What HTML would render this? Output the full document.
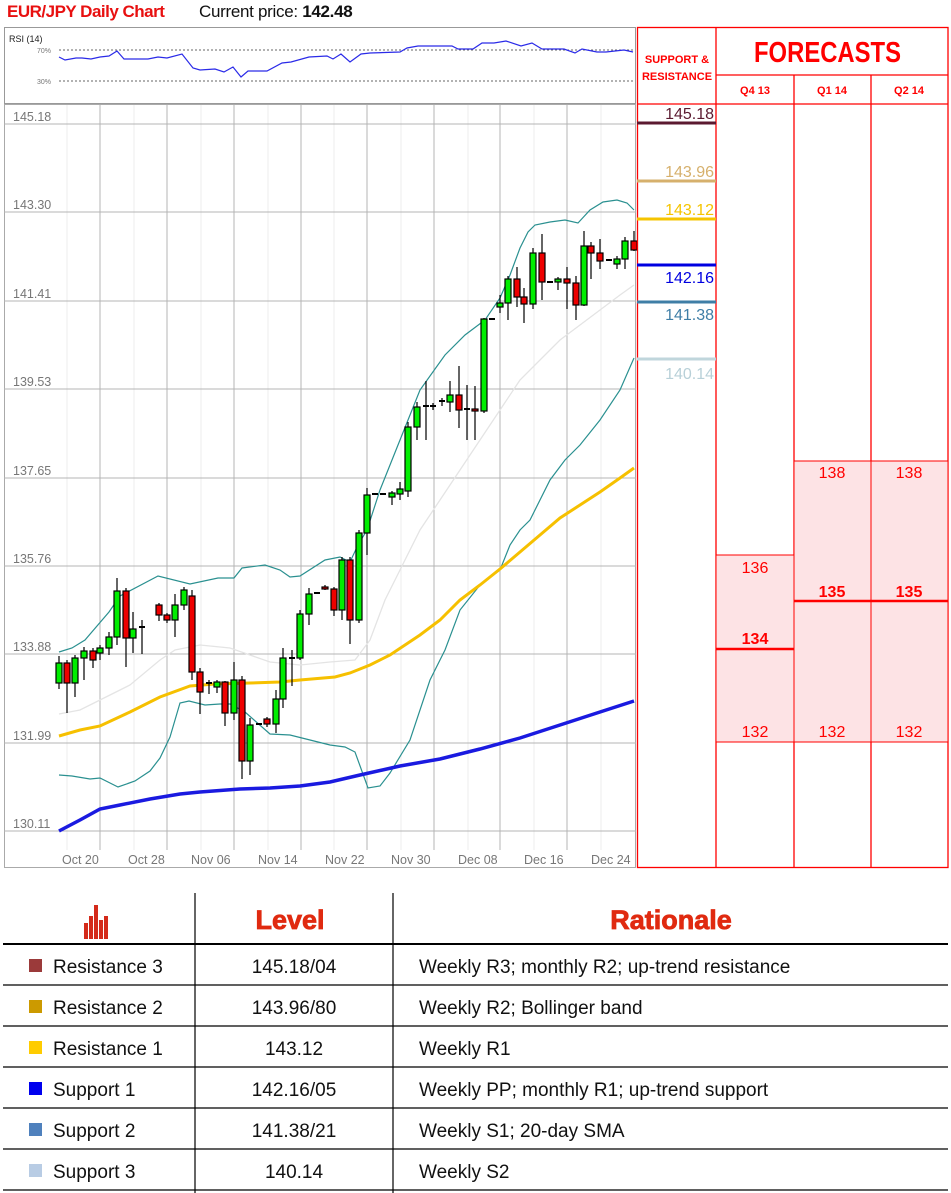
<!DOCTYPE html>
<html><head><meta charset="utf-8"><style>
body{margin:0;width:951px;height:1193px;background:#fff;position:relative;overflow:hidden;font-family:"Liberation Sans",sans-serif}
.t{position:absolute;white-space:nowrap}
</style></head><body>
<div class="t" style="left:7px;top:2px;font-size:17px;font-weight:bold;color:#e81010;letter-spacing:-0.5px">EUR/JPY Daily Chart</div>
<div class="t" style="left:199px;top:2px;font-size:17px;color:#111;letter-spacing:-0.3px">Current price: <b>142.48</b></div>

<svg width="951" height="870" style="position:absolute;left:0;top:0" font-family="Liberation Sans, sans-serif">
<rect x="4.5" y="27.5" width="631" height="76" fill="#fff" stroke="#999"/>
<text x="9" y="42" font-size="9" fill="#222">RSI (14)</text>
<text x="37" y="53" font-size="7" fill="#777">70%</text>
<text x="37" y="84" font-size="7" fill="#777">30%</text>
<line x1="59" y1="50" x2="634" y2="50" stroke="#666" stroke-dasharray="2,2"/>
<line x1="59" y1="81" x2="634" y2="81" stroke="#666" stroke-dasharray="2,2"/>
<polyline fill="none" stroke="#2a2ae8" stroke-width="1.2" points="59,57 65,60 76,58 82,58 91,59 100,57 109,56 117,51 124,59 148,59 158,57 167,58 182,54 193,68 200,70 215,69 224,72 233,67 241,77 248,71 267,71 282,63 291,62 309,57 327,56 333,59 341,54 350,62 361,54 370,53 400,52 407,48 418,46 452,46 458,49 473,49 482,43 494,43 506,41 521,46 532,43 542,49 564,49 575,53 582,49 597,52 606,52 624,50 633,52"/>
<rect x="4.5" y="104.5" width="631" height="763" fill="#fff" stroke="#aaa"/>
<g stroke="#ececec">
<line x1="67" y1="105" x2="67" y2="850"/><line x1="134" y1="105" x2="134" y2="850"/><line x1="201" y1="105" x2="201" y2="850"/><line x1="268" y1="105" x2="268" y2="850"/><line x1="334" y1="105" x2="334" y2="850"/><line x1="401" y1="105" x2="401" y2="850"/><line x1="468" y1="105" x2="468" y2="850"/><line x1="534" y1="105" x2="534" y2="850"/><line x1="601" y1="105" x2="601" y2="850"/>
</g>
<g stroke="#b4b4b4">
<line x1="100" y1="105" x2="100" y2="850"/><line x1="167" y1="105" x2="167" y2="850"/><line x1="234" y1="105" x2="234" y2="850"/><line x1="301" y1="105" x2="301" y2="850"/><line x1="367" y1="105" x2="367" y2="850"/><line x1="434" y1="105" x2="434" y2="850"/><line x1="500" y1="105" x2="500" y2="850"/><line x1="567" y1="105" x2="567" y2="850"/>
<line x1="4" y1="124" x2="636" y2="124"/><line x1="4" y1="212" x2="636" y2="212"/><line x1="4" y1="301" x2="636" y2="301"/><line x1="4" y1="389" x2="636" y2="389"/><line x1="4" y1="478" x2="636" y2="478"/><line x1="4" y1="566" x2="636" y2="566"/><line x1="4" y1="654" x2="636" y2="654"/><line x1="4" y1="743" x2="636" y2="743"/><line x1="4" y1="831" x2="636" y2="831"/>
</g>
<g font-size="12.5" fill="#777">
<text x="13" y="121">145.18</text><text x="13" y="209">143.30</text><text x="13" y="298">141.41</text><text x="13" y="386">139.53</text><text x="13" y="475">137.65</text><text x="13" y="563">135.76</text><text x="13" y="651">133.88</text><text x="13" y="740">131.99</text><text x="13" y="828">130.11</text>
<text x="62" y="864">Oct 20</text><text x="128" y="864">Oct 28</text><text x="191" y="864">Nov 06</text><text x="258" y="864">Nov 14</text><text x="325" y="864">Nov 22</text><text x="391" y="864">Nov 30</text><text x="458" y="864">Dec 08</text><text x="524" y="864">Dec 16</text><text x="591" y="864">Dec 24</text>
</g>
<polyline fill="none" stroke="#e4e4e4" stroke-width="1.3" points="59,714 80,710 100,700 130,685 160,660 175,650 200,645 230,648 250,655 270,662 300,665 330,662 355,660 370,640 385,600 400,570 420,530 440,500 460,470 480,440 500,410 520,380 540,360 560,340 580,325 600,310 620,295 634,285"/>
<polyline fill="none" stroke="#2a9090" stroke-width="1.2" points="59,652 72,648 85,640 109,612 120,596 158,576 190,584 218,578 234,578 242,568 265,565 280,570 290,577 300,576 325,560 340,557 350,562 358,545 367,530 380,490 400,440 420,390 445,355 465,335 485,320 500,298 510,275 520,248 528,232 535,225 550,222 565,220 578,223 590,210 603,202 617,200 627,203 634,210"/>
<polyline fill="none" stroke="#2a9090" stroke-width="1.2" points="59,775 72,776 90,779 100,778 118,787 135,781 150,771 160,758 170,737 180,703 189,701 205,705 220,704 230,704 245,712 270,734 290,735 310,740 330,745 345,747 355,752 368,788 380,786 390,773 410,740 430,680 445,650 460,610 480,585 500,570 510,545 520,530 530,520 550,480 565,460 580,445 600,420 620,390 634,358"/>
<polyline fill="none" stroke="#f6c000" stroke-width="3" points="59,736 80,730 100,726 130,712 160,697 190,686 215,684 250,683 280,682 300,680 335,677 350,673 370,665 390,655 420,635 440,620 460,600 480,585 500,569 520,552 540,535 560,518 580,505 600,492 620,478 634,468"/>
<polyline fill="none" stroke="#1a1ae0" stroke-width="3.5" points="59,831 80,820 100,809 120,805 150,799 180,794 200,792 240,789 270,788 300,786 330,782 360,775 400,766 440,759 480,749 520,738 560,725 600,712 634,701"/>
<g id="c" stroke="#000" stroke-width="1.2"></g>
<g stroke="#f00" stroke-width="1.3" fill="none">
<rect x="637.5" y="27.5" width="310.5" height="840"/>
<line x1="716" y1="27" x2="716" y2="868"/>
<line x1="794" y1="75" x2="794" y2="868"/>
<line x1="871" y1="75" x2="871" y2="868"/>
<line x1="716" y1="75" x2="948" y2="75"/>
<line x1="637" y1="104" x2="948" y2="104"/>
</g>
<rect x="716" y="555" width="78" height="187" fill="#fde3e5" stroke="#f00"/>
<rect x="794" y="461" width="154" height="281" fill="#fde3e5" stroke="#f00"/>
<line x1="871" y1="461" x2="871" y2="742" stroke="#f00"/>
<line x1="716" y1="649" x2="794" y2="649" stroke="#f00" stroke-width="2.5"/>
<line x1="794" y1="601" x2="948" y2="601" stroke="#f00" stroke-width="2.5"/>
<g fill="#f00" font-size="16" text-anchor="middle">
<text x="755" y="573">136</text><text x="755" y="644" font-weight="bold">134</text><text x="755" y="737">132</text>
<text x="832" y="478">138</text><text x="832" y="597" font-weight="bold">135</text><text x="832" y="737">132</text>
<text x="909" y="478">138</text><text x="909" y="597" font-weight="bold">135</text><text x="909" y="737">132</text>
</g>
<g fill="#f00" font-size="11" font-weight="bold" text-anchor="middle">
<text x="677" y="63">SUPPORT &amp;</text><text x="677" y="80">RESISTANCE</text>
<text x="755" y="94">Q4 13</text><text x="832" y="94">Q1 14</text><text x="909" y="94">Q2 14</text>
</g>
<text x="754" y="62" fill="#f00" font-size="29" font-weight="bold" textLength="147" lengthAdjust="spacingAndGlyphs">FORECASTS</text>
<g stroke-width="3">
<line x1="637" y1="123" x2="716" y2="123" stroke="#5b1a30"/>
<line x1="637" y1="181" x2="716" y2="181" stroke="#d6b06c"/>
<line x1="637" y1="219" x2="716" y2="219" stroke="#f5c400"/>
<line x1="637" y1="265" x2="716" y2="265" stroke="#0000e0"/>
<line x1="637" y1="302" x2="716" y2="302" stroke="#3f7ea6"/>
<line x1="637" y1="359" x2="716" y2="359" stroke="#c0d6dc"/>
</g>
<g font-size="16" text-anchor="end">
<text x="714" y="119" fill="#5b1a30">145.18</text>
<text x="714" y="177" fill="#d6b06c">143.96</text>
<text x="714" y="215" fill="#f5c400">143.12</text>
<text x="714" y="283" fill="#0000e0">142.16</text>
<text x="714" y="320" fill="#3f7ea6">141.38</text>
<text x="714" y="379" fill="#b8d0d8">140.14</text>
</g>
</svg>

<svg width="951" height="310" style="position:absolute;left:0;top:883" font-family="Liberation Sans, sans-serif">
<g stroke="#000" stroke-width="1.2">
<line x1="195" y1="10" x2="195" y2="310"/><line x1="393" y1="10" x2="393" y2="310"/>
<line x1="3" y1="61" x2="948" y2="61" stroke-width="2"/>
<line x1="3" y1="102" x2="948" y2="102"/><line x1="3" y1="143" x2="948" y2="143"/><line x1="3" y1="184" x2="948" y2="184"/><line x1="3" y1="225" x2="948" y2="225"/><line x1="3" y1="266" x2="948" y2="266"/><line x1="3" y1="307" x2="948" y2="307"/>
</g>
<g fill="#d42a1a"><rect x="84" y="40" width="4" height="16"/><rect x="89" y="33" width="4" height="23"/><rect x="94" y="22" width="4" height="34"/><rect x="99" y="37" width="4" height="19"/><rect x="104" y="33" width="4" height="23"/></g>
<g fill="#e02a10" font-size="27" font-weight="bold" text-anchor="middle" stroke="#e02a10" stroke-width="0.8"><text x="290" y="46">Level</text><text x="671" y="46">Rationale</text></g>
<g font-size="19" fill="#111">
<rect x="29" y="76" width="13" height="13" fill="#9b3a3a"/><text x="53" y="90">Resistance 3</text><text x="294" y="90" text-anchor="middle">145.18/04</text><text x="419" y="90">Weekly R3; monthly R2; up-trend resistance</text>
<rect x="29" y="117" width="13" height="13" fill="#cc9a00"/><text x="53" y="131">Resistance 2</text><text x="294" y="131" text-anchor="middle">143.96/80</text><text x="419" y="131">Weekly R2; Bollinger band</text>
<rect x="29" y="158" width="13" height="13" fill="#ffcc00"/><text x="53" y="172">Resistance 1</text><text x="294" y="172" text-anchor="middle">143.12</text><text x="419" y="172">Weekly R1</text>
<rect x="29" y="199" width="13" height="13" fill="#0000ee"/><text x="53" y="213">Support 1</text><text x="294" y="213" text-anchor="middle">142.16/05</text><text x="419" y="213">Weekly PP; monthly R1; up-trend support</text>
<rect x="29" y="240" width="13" height="13" fill="#4f81bd"/><text x="53" y="254">Support 2</text><text x="294" y="254" text-anchor="middle">141.38/21</text><text x="419" y="254">Weekly S1; 20-day SMA</text>
<rect x="29" y="281" width="13" height="13" fill="#b8cce4"/><text x="53" y="295">Support 3</text><text x="294" y="295" text-anchor="middle">140.14</text><text x="419" y="295">Weekly S2</text>
</g>
</svg>
<script>
var C=[[59,663,683,656,689,1],[67,663,683,660,713,0],[75,658,683,655,697,1],[84,651,658,647,680,1],[93,651,660,648,668,0],[100,648,653,645,660,1],[109,637,648,632,655,1],[117,591,637,578,645,1],[126,591,638,588,667,0],[133,629,638,612,653,1],[142,627,628,620,654,2],[159,605,615,603,621,0],[167,615,620,613,623,0],[175,605,620,594,637,1],[184,590,605,587,610,1],[192,596,672,590,680,0],[200,672,692,668,714,0],[209,683,684,680,694,2],[217,682,687,680,693,1],[225,682,713,681,726,0],[234,680,713,662,720,1],[242,680,761,676,779,0],[250,725,761,718,775,1],[259,724,725,724,725,2],[267,719,724,717,727,0],[276,699,724,690,733,1],[283,658,699,648,708,1],[292,658,659,650,686,2],[300,614,658,610,660,1],[309,594,614,588,625,1],[317,593,594,593,594,2],[325,587,589,585,590,0],[334,589,610,587,616,0],[342,560,610,557,620,1],[350,560,620,557,644,0],[359,533,620,530,623,1],[367,495,533,488,555,1],[375,494,495,494,495,2],[383,494,495,494,495,2],[392,493,497,491,505,1],[400,489,494,482,500,1],[408,427,491,422,497,1],[417,407,427,402,440,1],[426,406,407,381,440,2],[433,406,407,403,410,2],[442,401,402,398,406,2],[450,395,402,381,412,1],[459,395,410,366,428,0],[467,409,410,385,440,2],[475,409,411,386,440,0],[484,319,411,318,413,1],[492,319,320,319,320,2],[500,303,307,295,313,1],[508,279,303,276,320,1],[517,279,297,267,307,0],[524,297,304,288,323,0],[533,253,304,248,309,1],[542,253,282,234,300,0],[550,282,283,282,283,2],[558,279,282,277,290,1],[567,279,283,267,309,0],[576,283,305,276,320,0],[584,246,305,231,306,1],[591,246,253,242,279,0],[600,253,261,239,269,0],[609,260,261,260,261,2],[617,259,264,256,269,1],[625,241,259,237,269,1],[634,241,250,231,251,0]];
var g=document.getElementById('c'),s='';
C.forEach(function(c){var x=c[0];s+='<line x1="'+x+'" y1="'+c[3]+'" x2="'+x+'" y2="'+c[4]+'"/>';
if(c[5]==2){s+='<line x1="'+(x-3)+'" y1="'+c[1]+'" x2="'+(x+3)+'" y2="'+c[1]+'" stroke-width="2"/>';}
else{s+='<rect x="'+(x-3)+'" y="'+c[1]+'" width="6" height="'+Math.max(2,c[2]-c[1])+'" fill="'+(c[5]?'#00ee00':'#ee0000')+'"/>';}});
g.innerHTML=s;
</script>
</body></html>
